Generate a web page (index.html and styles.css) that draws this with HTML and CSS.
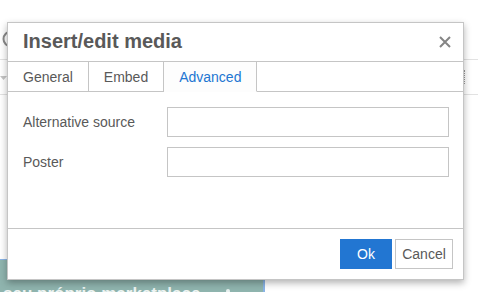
FILE: index.html
```html
<!DOCTYPE html>
<html>
<head>
<meta charset="utf-8">
<link rel="stylesheet" href="styles.css">
</head>
<body>
<div class="editor">
  <div class="menubar">
    <svg class="ring" width="20" height="20" viewBox="0 0 20 20"><circle cx="10" cy="10" r="7.5" fill="none" stroke="#8a8a8a" stroke-width="2"/></svg>
  </div>
  <div class="toolbar">
    <svg class="caret" width="8" height="6" viewBox="0 0 8 6"><path d="M0 0 L7 0 L3.5 4 Z" fill="#c4c4c4"/></svg>
    <div class="sep"></div>
  </div>
  <div class="content">
    <div class="image">
      <span class="caption">seu próprio marketplace</span>
      <span class="dot"></span>
    </div>
  </div>
</div>

<div class="dialog">
  <div class="head">
    <div class="title">Insert/edit media</div>
    <svg class="close" width="12" height="12" viewBox="0 0 12 12"><path d="M1 1 L11 11 M11 1 L1 11" stroke="#858585" stroke-width="2" fill="none"/></svg>
  </div>
  <div class="tabs">
    <div class="tab">General</div>
    <div class="tab">Embed</div>
    <div class="tab active">Advanced</div>
    <div class="tabfill"></div>
  </div>
  <div class="body">
    <div class="row">
      <label class="label">Alternative source</label>
      <div class="input"></div>
    </div>
    <div class="row">
      <label class="label">Poster</label>
      <div class="input"></div>
    </div>
  </div>
  <div class="foot">
    <div class="btn ok">Ok</div>
    <div class="btn cancel">Cancel</div>
  </div>
</div>
</body>
</html>
```
FILE: styles.css
```css
html, body {
  margin: 0;
  padding: 0;
  background: #fff;
}
body {
  width: 478px;
  height: 292px;
  overflow: hidden;
  position: relative;
  font-family: "Liberation Sans", Arial, sans-serif;
}
.editor {
  display: flex;
  flex-direction: column;
  width: 478px;
  height: 292px;
}
.menubar {
  box-sizing: border-box;
  height: 60px;
  border-bottom: 1px solid #e2e2e2;
  display: flex;
  align-items: flex-start;
}
.ring {
  margin-top: 29px;
  margin-left: 1px;
}
.toolbar {
  height: 35px;
  box-sizing: border-box;
  border-bottom: 1px solid #e2e2e2;
  display: flex;
  align-items: center;
  justify-content: space-between;
}
.caret {
  margin-top: 3px;
}
.sep {
  width: 0;
  height: 14px;
  border-left: 1px dotted #9a9a9a;
  margin-right: 13px;
}
.content {
  flex: 1;
  display: flex;
  flex-direction: column;
  justify-content: flex-end;
}
.image {
  position: relative;
  width: 265px;
  height: 33px;
  box-sizing: border-box;
  background: #8fb4ae;
  border-top: 1px solid #8ab4e6;
  border-right: 2px solid #8ab4e6;
  padding: 24px 0 0 3px;
  overflow: hidden;
}
.caption {
  display: block;
  font-size: 17px;
  line-height: 20px;
  color: #eef4f3;
  white-space: nowrap;
  font-weight: bold;
}
.dot {
  position: absolute;
  left: 226px;
  top: 29px;
  width: 4px;
  height: 4px;
  border-radius: 50%;
  background: #e8f0ef;
}

.dialog {
  position: absolute;
  left: 7px;
  top: 22px;
  width: 457px;
  height: 258px;
  box-sizing: border-box;
  border: 1px solid #c5c5c5;
  background: #fff;
  box-shadow: 0 3px 7px rgba(0, 0, 0, 0.3);
  display: flex;
  flex-direction: column;
  color: #595959;
}
.head {
  height: 39px;
  box-sizing: border-box;
  border-bottom: 1px solid #c5c5c5;
  display: flex;
  align-items: center;
  justify-content: space-between;
  padding: 0 12px 0 15px;
}
.title {
  font-size: 20px;
  font-weight: bold;
  line-height: 36px;
  padding-bottom: 2px;
  color: #595959;
}
.close {
  display: block;
}
.tabs {
  display: flex;
  height: 30px;
}
.tab {
  box-sizing: border-box;
  height: 30px;
  padding: 2px 15px 0;
  font-size: 14px;
  line-height: 27px;
  border-right: 1px solid #c5c5c5;
  border-bottom: 1px solid #c5c5c5;
  background: #fff;
  color: #595959;
}
.tab.active {
  background: #fdfdfd;
  color: #2276d2;
  border-bottom-color: transparent;
}
.tabfill {
  flex: 1;
  border-bottom: 1px solid #c5c5c5;
}
.body {
  flex: 1;
  padding: 15px 14px 0 15px;
  display: flex;
  flex-direction: column;
  gap: 10px;
}
.row {
  display: flex;
  align-items: center;
}
.label {
  width: 144px;
  font-size: 14px;
  color: #595959;
}
.input {
  width: 282px;
  height: 30px;
  box-sizing: border-box;
  border: 1px solid #c5c5c5;
  background: #fff;
}
.foot {
  height: 51px;
  box-sizing: border-box;
  border-top: 1px solid #c5c5c5;
  padding: 10px;
  display: flex;
  justify-content: flex-end;
  gap: 3px;
}
.btn {
  height: 30px;
  box-sizing: border-box;
  font-size: 14px;
  line-height: 28px;
  text-align: center;
  border: 1px solid transparent;
}
.ok {
  width: 52px;
  background: #2276d2;
  border-color: #2276d2;
  color: #fff;
}
.cancel {
  width: 58px;
  background: #fff;
  border-color: #c5c5c5;
  color: #595959;
}
```
